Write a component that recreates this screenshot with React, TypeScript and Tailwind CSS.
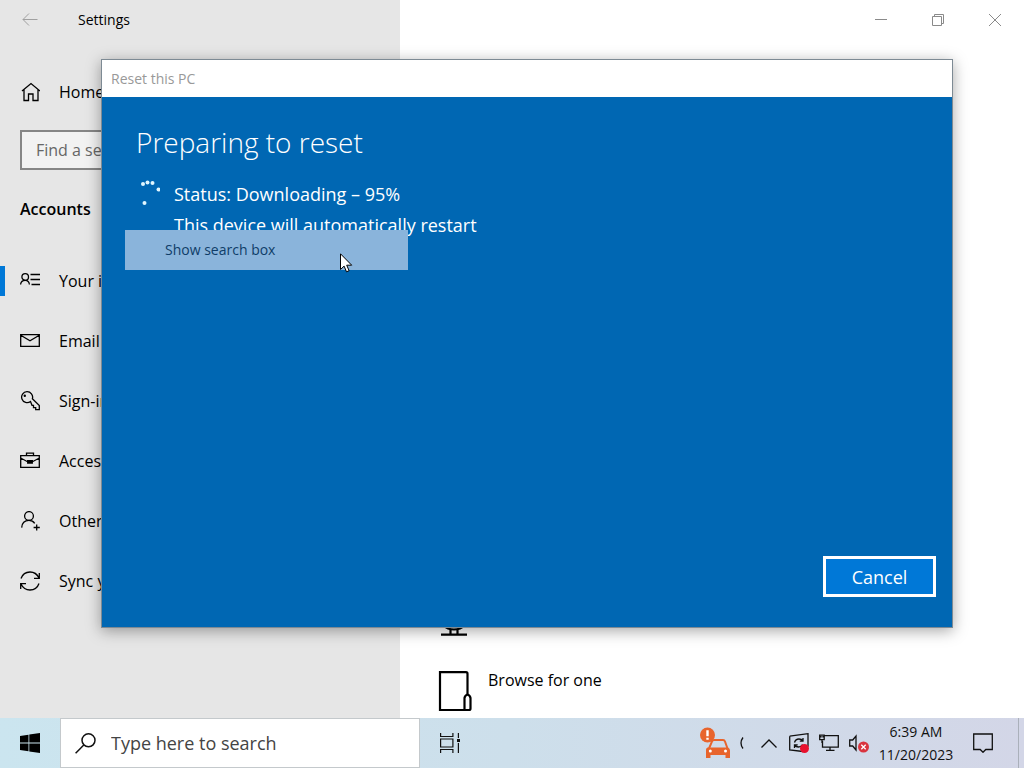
import type { ReactNode } from "react";

function Icon({ children, className = "size-5" }: { children: ReactNode; className?: string }) {
  return (
    <svg
      viewBox="0 0 20 20"
      className={`shrink-0 ${className}`}
      fill="none"
      stroke="currentColor"
      strokeWidth="1.3"
      aria-hidden="true"
    >
      {children}
    </svg>
  );
}

const navItems = [
  {
    label: "Your info",
    icon: (
      <>
        <circle cx="5.2" cy="6" r="3.3" />
        <path d="M.6 13.500c.2-2.600 2-4.200 4.600-4.200s4 1.600 4.200 4.200M10.500 3.500H20M10.500 8.500H20M11.500 13.500H20" />
      </>
    ),
  },
  {
    label: "Email & accounts",
    icon: <path d="M.7 3.700h18.600v11.600H.7zM.7 4.300 10 9.700l9.300-5.400" />,
  },
  {
    label: "Sign-in options",
    icon: (
      <>
        <path d="M10.500 10.500a5.500 5.500 0 1 1 1.900-2.800l6.900 6.800v4.200h-3.600v-2.100h-2.200v-2.300h-1.500z" />
        <circle cx="4.800" cy="4.800" r="1.200" fill="currentColor" stroke="none" />
      </>
    ),
  },
  {
    label: "Access work or school",
    icon: (
      <path d="M.7 4.700h18.600v11.600H.7zM6.500 4.500V2.200h7v2.300M.7 7l6.800 3.700h5L19.300 7M7.700 9.700h4.600V12H7.700z" />
    ),
  },
  {
    label: "Other users",
    icon: (
      <>
        <circle cx="9" cy="5" r="4.400" />
        <path d="M1.700 16.600c.3-4.500 3.200-7.200 7.300-7.200 2.600 0 4.500 1.100 5.700 2.900M16.700 13.400V19.600M13.600 16.500h6.200" />
      </>
    ),
  },
  {
    label: "Sync your settings",
    icon: (
      <path d="M1 7.500C2.500 3.300 6 1 10 1c4 0 7.300 2.400 9 6M19.300 2v5.300H14M19 12.500C17.500 16.700 14 19 10 19c-4 0-7.300-2.400-9-6M.7 18v-5.300H6" />
    ),
  },
];

function Sidebar() {
  return (
    <aside className="flex w-[400px] shrink-0 flex-col bg-[#e6e6e6]">
      <div className="flex h-10 items-center gap-10 pl-[22px]">
        <button aria-label="Back" className="text-[#a0a0a0]">
          <svg width="16" height="14" viewBox="0 0 16 14" fill="none" stroke="currentColor" aria-hidden="true">
            <path d="M15.500 6.500H1M7 .5l-6 6 6 6" />
          </svg>
        </button>
        <h1 className="text-sm">Settings</h1>
      </div>

      <a href="#home" className="mt-8 flex h-10 items-center gap-[19px] px-5 text-base">
        <Icon>
          <path d="M2 9 11 1.500 20 9M4 7.800V18.500h4.500v-6.500h4.500v6.500h5V7.800" />
        </Icon>
        Home
      </a>

      <div className="mt-[18px] px-5">
        <input
          type="search"
          aria-label="Find a setting"
          placeholder="Find a setting"
          className="h-10 w-full border-2 border-[#868686] bg-[#f2f2f2] px-3.5 text-base outline-none placeholder:text-[#666]"
        />
      </div>

      <h2 className="mt-[27px] px-5 text-base font-semibold">Accounts</h2>

      <nav className="mt-[30px] flex flex-col">
        {navItems.map((item, i) => (
          <a
            key={item.label}
            href="#accounts"
            className="flex h-[60px] items-center text-base"
          >
            <span className={`h-[30px] w-[5px] ${i === 0 ? "bg-[#0078d7]" : ""}`} />
            <span className="flex items-center gap-[19px] pl-[15px]">
              <Icon>{item.icon}</Icon>
              {item.label}
            </span>
          </a>
        ))}
      </nav>
    </aside>
  );
}

function WindowButtons() {
  return (
    <div className="flex h-10 justify-end pr-px text-[#8a8a8a]">
      <button aria-label="Minimize" className="grid w-[57px] place-items-center">
        <svg width="12" height="12" fill="none" stroke="currentColor" aria-hidden="true">
          <path d="M0 5.500h12" />
        </svg>
      </button>
      <button aria-label="Restore" className="grid w-[57px] place-items-center">
        <svg width="12" height="12" fill="none" stroke="currentColor" aria-hidden="true">
          <path d="M.5 2.500h9v9h-9zM2.500 2.500v-2h9v9h-2" />
        </svg>
      </button>
      <button aria-label="Close" className="grid w-[57px] place-items-center">
        <svg width="12" height="12" fill="none" stroke="currentColor" aria-hidden="true">
          <path d="m0 0 12 12M12 0 0 12" />
        </svg>
      </button>
    </div>
  );
}

function Content() {
  return (
    <main className="flex min-w-0 flex-1 flex-col bg-white">
      <WindowButtons />
      <div className="flex flex-1 flex-col justify-end gap-[33px] pb-1.5 pl-[38px]">
        <svg width="32" height="40" viewBox="0 0 32 40" fill="none" stroke="#000" strokeWidth="2.2" aria-hidden="true">
          <circle cx="16" cy="17" r="15.500" />
          <circle cx="16" cy="17" r="6" />
          <path d="M12.500 32v6M19.500 32v6M3 37.700h26" />
        </svg>
        <a href="#browse" className="flex items-start gap-4">
          <svg width="34" height="42" viewBox="0 0 34 42" fill="none" stroke="#000" strokeWidth="2.2" aria-hidden="true">
            <path d="M26 40H2V2.200h26q1.500 0 1.500 1.500V24" />
            <path d="M26.500 40V28q.3-2.500 3-3.500 2.700 1 3 3.500v10.500q0 1.500-1.500 1.500z" />
          </svg>
          <span className="text-base leading-5">Browse for one</span>
        </a>
      </div>
    </main>
  );
}

function ResetDialog() {
  return (
    <div
      role="dialog"
      aria-labelledby="reset-title"
      className="absolute top-[59px] right-[71px] bottom-[90px] left-[101px] flex flex-col border border-[#7d8a94] bg-[#0067b3] shadow-[0_3px_14px_rgba(0,0,0,0.35)]"
    >
      <div id="reset-title" className="flex h-[37px] items-center bg-white pl-[9px] text-sm text-[#999]">
        Reset this PC
      </div>
      <div className="flex flex-1 flex-col px-[34px] pt-[23px] text-white">
        <h2 className="text-[28px] leading-[44px] font-light">Preparing to reset</h2>
        <div className="mt-[15px] flex gap-[14px]">
          <svg width="24" height="28" viewBox="0 0 24 28" fill="#e0f6ff" aria-hidden="true">
            <circle cx="7" cy="5" r="2" />
            <circle cx="11.500" cy="3.500" r="2" />
            <circle cx="16.500" cy="4" r="2" />
            <circle cx="22.500" cy="10.500" r="2" />
            <circle cx="8.500" cy="24" r="2" />
          </svg>
          <div role="status" className="text-lg leading-[31px]">
            <p>Status: Downloading – 95%</p>
            <p>This device will automatically restart</p>
          </div>
        </div>
      </div>
      <div className="flex justify-end pr-4 pb-[30px]">
        <button className="h-[41px] w-[113px] border-[3px] border-white bg-[#0078d7] text-lg text-white">
          Cancel
        </button>
      </div>
    </div>
  );
}

function Taskbar() {
  return (
    <footer className="flex h-[50px] shrink-0 bg-linear-to-r from-[#cbe5ef] via-[#cddfeb] to-[#d3d6e7]">
      <button aria-label="Start" className="grid w-[60px] place-items-center">
        <svg width="20" height="20" viewBox="0 0 20 20" aria-hidden="true">
          <path d="M0 3l8.500-1.300v7.800H0zM9.300 1.600 20 0v9.500H9.300zM0 10.400h8.500v7.900L0 17.100zM9.300 10.400H20V20L9.300 18.400z" />
        </svg>
      </button>
      <label className="flex w-[360px] items-center gap-[15px] border border-[#c4c9cc] bg-white pl-[14px]">
        <svg className="shrink-0" width="21" height="21" viewBox="0 0 21 21" fill="none" stroke="#111" strokeWidth="1.5" aria-hidden="true">
          <circle cx="13.500" cy="7.300" r="6.500" />
          <path d="M8.800 12 .6 20.200" />
        </svg>
        <input
          type="text"
          aria-label="Type here to search"
          placeholder="Type here to search"
          className="w-full bg-transparent text-lg outline-none placeholder:text-[#444]"
        />
      </label>
      <button aria-label="Task view" className="grid w-[60px] place-items-center">
        <svg width="20" height="20" viewBox="0 0 20 20" fill="none" stroke="#111" strokeWidth="1.2" aria-hidden="true">
          <path d="M.6 0v3.500h12.300V0M.6 6h12.300v8H.6zM.6 20v-3.500h12.300V20M18.400 0v5M18.400 10v10" />
          <path d="M17 6h3v3h-3z" fill="#111" stroke="none" />
        </svg>
      </button>

      <div className="ml-auto flex text-[#111]">
        <button aria-label="Traffic" className="flex w-[60px] items-center gap-[9px] pl-1.5">
          <svg width="31" height="32" viewBox="0 0 31 32" fill="none" aria-hidden="true">
            <circle cx="7.500" cy="8" r="7.500" fill="#e8642c" />
            <path d="M7.500 3.200v6M7.500 10.800v2" stroke="#fff" strokeWidth="2.400" />
            <path d="M9 21.500 12 14.500q.5-1.500 2-1.500h9q1.500 0 2 1.500l2.500 7" stroke="#e8642c" strokeWidth="2" />
            <path
              d="M7.500 20.500h20.500q2 1 2 3V31h-4.500v-3H10.500v3H6v-7.500q-.5-2 1.500-3z"
              fill="#e8642c"
            />
            <circle cx="10.300" cy="24" r="1.500" fill="#fff" />
            <circle cx="25.500" cy="24" r="1.500" fill="#fff" />
          </svg>
          <svg width="5" height="12" viewBox="0 0 5 12" fill="none" stroke="currentColor" strokeWidth="1.3" aria-hidden="true">
            <path d="M3 .5Q-1 6 3 11.500" />
          </svg>
        </button>
        <button aria-label="Show hidden icons" className="grid w-[30px] place-items-center">
          <svg width="16" height="9" viewBox="0 0 16 9" fill="none" stroke="currentColor" strokeWidth="1.3" aria-hidden="true">
            <path d="M.5 8.500 8 1l7.500 7.500" />
          </svg>
        </button>
        <button aria-label="Windows Update" className="grid w-[30px] place-items-center">
          <Icon>
            <path d="M.7 3.200 19 .7v13M14 18.500.7 17V3.200" />
            <path d="M5.500 9.500Q6.500 6 10 6q2.500 0 4 2M14 5v3.200h-3.200M13.500 11.500Q12 14 9.500 14q-2.500 0-4-2M5.500 15v-3.200h3.200" />
            <circle cx="15.500" cy="15.500" r="4.500" fill="#e8112d" stroke="none" />
          </Icon>
        </button>
        <button aria-label="Network" className="grid w-[30px] place-items-center">
          <Icon>
            <path d="M5 2.700h14.300v11.500H3.500V8M11 14.200v3M7 17.300h8.500M.7 2.200h4.500v4.500H.7zM3 6.700V10M2 3v1.500M4 3v1.500" />
          </Icon>
        </button>
        <button aria-label="Volume" className="grid w-[30px] place-items-center">
          <Icon>
            <path d="M7 17 3.700 13H.7V7h3L7 3z" />
            <circle cx="14.500" cy="14" r="5.500" fill="#d9343f" stroke="none" />
            <path d="m12.300 11.800 4.400 4.400M16.700 11.800l-4.400 4.400" stroke="#fff" />
          </Icon>
        </button>
        <button className="w-[84px] text-center text-sm leading-[23px]">
          <span className="block">6:39 AM</span>
          <span className="block">11/20/2023</span>
        </button>
        <button aria-label="Notifications" className="grid w-[50px] place-items-center">
          <Icon>
            <path d="M.7 1h18.600v15.500h-6.500L10 19.300l-2.800-2.800H.7z" />
          </Icon>
        </button>
        <button aria-label="Show desktop" className="ml-[10px] w-1.5 border-l border-[#aab0ba]" />
      </div>
    </footer>
  );
}

export default function App() {
  return (
    <div className="relative flex h-screen flex-col overflow-hidden font-['Open_Sans','Noto_Sans',sans-serif] text-black">
      <div className="relative flex min-h-0 flex-1">
        <Sidebar />
        <Content />
        <ResetDialog />
      </div>
      <Taskbar />

      {/* Leftover taskbar menu entry, still fading out */}
      <div
        role="menuitem"
        className="absolute top-[230px] left-[125px] flex h-10 w-[283px] items-center bg-[#8ab4db] pl-10 text-sm text-[#0f3d68]"
      >
        Show search box
      </div>

      <svg width="13" height="20" viewBox="0 0 13 20" className="absolute top-[253px] left-[340px]" aria-hidden="true">
        <path d="M.5.800v15.700l3.600-3.400 2.400 5.700 2.600-1.100-2.400-5.500h5z" fill="#fff" stroke="#000" />
      </svg>
    </div>
  );
}
